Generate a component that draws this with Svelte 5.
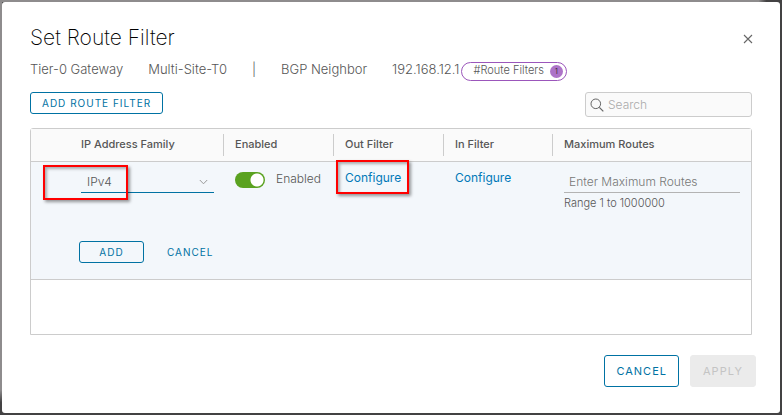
<script>
  let family = $state('IPv4');
  let enabled = $state(true);
  let maxRoutes = $state('');
  let query = $state('');
</script>

<div class="backdrop">
  <div class="modal" role="dialog" aria-labelledby="dialog-title">
    <header>
      <h1 id="dialog-title">Set Route Filter</h1>
      <button class="close" type="button" aria-label="Close">
        <svg width="10" height="10" viewBox="0 0 10 10" aria-hidden="true">
          <path d="M1 1l8 8M9 1l-8 8" fill="none" stroke="#666" stroke-width="1.1" />
        </svg>
      </button>
    </header>

    <div class="context">
      <span>Tier-0 Gateway</span>
      <span>Multi-Site-T0</span>
      <span>|</span>
      <span>BGP Neighbor</span>
      <span class="neighbor">
        192.168.12.1
        <span class="tag">#Route Filters <span class="count">1</span></span>
      </span>
    </div>

    <div class="toolbar">
      <button class="btn small" type="button">ADD ROUTE FILTER</button>
      <label class="search">
        <svg width="14" height="14" viewBox="0 0 14 14" aria-hidden="true">
          <circle cx="5.8" cy="5.8" r="4.8" fill="none" stroke="#666" />
          <path d="M9.3 9.3l4 4" stroke="#666" stroke-width="1.2" />
        </svg>
        <input type="search" placeholder="Search" aria-label="Search" bind:value={query} />
      </label>
    </div>

    <div class="grid">
      <table>
        <colgroup>
          <col class="c-pad" />
          <col class="c-family" />
          <col class="c-mid" />
          <col class="c-mid" />
          <col class="c-in" />
          <col />
        </colgroup>
        <thead>
          <tr>
            <td></td>
            <th scope="col">IP Address Family</th>
            <th scope="col" class="sep">Enabled</th>
            <th scope="col" class="sep">Out Filter</th>
            <th scope="col" class="sep">In Filter</th>
            <th scope="col" class="sep">Maximum Routes</th>
          </tr>
        </thead>
        <tbody>
          <tr class="fields">
            <td></td>
            <td>
              <div class="select">
                <select aria-label="IP Address Family" bind:value={family}>
                  <option>IPv4</option>
                  <option>IPv6</option>
                </select>
                <svg width="9" height="6" viewBox="0 0 9 6" aria-hidden="true">
                  <path d="M.8 1l3.7 3.8L8.2 1" fill="none" stroke="#999" />
                </svg>
                <span class="mark mark-family"></span>
              </div>
            </td>
            <td>
              <label class="toggle">
                <input type="checkbox" bind:checked={enabled} />
                <span>Enabled</span>
              </label>
            </td>
            <td>
              <div class="linkbox">
                <a href="#out-filter">Configure</a>
                <span class="mark mark-out"></span>
              </div>
            </td>
            <td>
              <div class="linkbox"><a href="#in-filter">Configure</a></div>
            </td>
            <td>
              <div class="routes">
                <input
                  type="text"
                  placeholder="Enter Maximum Routes"
                  aria-label="Maximum Routes"
                  aria-describedby="routes-help"
                  bind:value={maxRoutes}
                />
                <small id="routes-help">Range 1 to 1000000</small>
              </div>
            </td>
          </tr>
          <tr class="actions">
            <td></td>
            <td colspan="5">
              <div class="rowbuttons">
                <button class="btn small add" type="button">ADD</button>
                <button class="btn small flat" type="button">CANCEL</button>
              </div>
            </td>
          </tr>
        </tbody>
      </table>
    </div>

    <footer>
      <button class="btn" type="button">CANCEL</button>
      <button class="btn apply" type="button" disabled>APPLY</button>
    </footer>
  </div>
</div>

<style>
  :global(body) {
    margin: 0;
  }
  * {
    box-sizing: border-box;
  }
  .backdrop {
    display: flex;
    min-height: 100vh;
    padding: 2px;
    background:
      linear-gradient(90deg, #8e8c8d 97%, #434243 98%) top / 100% 2px no-repeat,
      linear-gradient(#8e8c8d 94%, #434243 97%) left / 2px 100% no-repeat,
      #434243;
    font-family: Inter, 'Open Sans', sans-serif;
    font-size: 13px;
    font-weight: 300;
    line-height: 18px;
    color: #565656;
  }
  .modal {
    flex: 1;
    min-width: 0;
    display: flex;
    flex-direction: column;
    padding: 24px 28px 26px;
    border-radius: 3px;
    background: #fff;
  }
  header {
    display: flex;
    justify-content: space-between;
    align-items: center;
  }
  h1 {
    margin: 0;
    font-size: 21px;
    line-height: 24px;
    font-weight: 200;
    color: #000;
  }
  button,
  input,
  select {
    font: inherit;
    color: inherit;
  }
  .close {
    display: flex;
    padding: 0;
    margin: 2px -1px 0 0;
    border: 0;
    background: none;
  }
  .context {
    display: flex;
    gap: 25px;
    align-items: center;
    height: 20px;
    margin-top: 9px;
  }
  .neighbor {
    display: flex;
    align-items: center;
    gap: 2px;
  }
  .tag {
    display: flex;
    align-items: center;
    gap: 6px;
    height: 19px;
    margin-top: 4px;
    padding: 0 3px 2px 11px;
    border: 1px solid #9b56bb;
    border-radius: 10px;
    font-size: 11px;
    line-height: 16px;
  }
  .count {
    width: 13px;
    height: 13px;
    margin-top: 2px;
    border-radius: 50%;
    background: #ad73c8;
    color: #222;
    font-size: 8px;
    line-height: 13px;
    text-align: center;
  }
  .toolbar {
    display: flex;
    justify-content: space-between;
    align-items: flex-start;
    margin-top: 13px;
  }
  .btn {
    height: 32px;
    padding: 0 11px;
    border: 1px solid #0072a3;
    border-radius: 3px;
    background: transparent;
    color: #0072a3;
    font-size: 11px;
    font-weight: 400;
    line-height: 16px;
    letter-spacing: 1px;
  }
  .btn.small {
    height: 22px;
    font-size: 10px;
  }
  .search {
    display: flex;
    align-items: center;
    gap: 4px;
    width: 167px;
    height: 25px;
    padding: 0 4px;
    border: 1px solid #ccc;
    border-radius: 3px;
    background: #fafafa;
  }
  .search input {
    flex: 1;
    min-width: 0;
    padding: 0;
    border: 0;
    outline: 0;
    background: none;
    font-size: 12px;
  }
  .search input::placeholder {
    color: #aaa;
  }
  .grid {
    flex: 1;
    margin-top: 11px;
    border: 1px solid #ccc;
    border-radius: 3px 3px 0 0;
  }
  table {
    width: 100%;
    table-layout: fixed;
    border-collapse: separate;
    border-spacing: 0;
  }
  .c-pad {
    width: 38px;
  }
  .c-family {
    width: 154px;
  }
  .c-mid {
    width: 110px;
  }
  .c-in {
    width: 109px;
  }
  th,
  td {
    padding: 0 11px 0 12px;
    text-align: left;
    vertical-align: top;
  }
  thead th,
  thead td {
    height: 33px;
    border-bottom: 1px solid #ccc;
    background: #fafafa;
    font-size: 11px;
    font-weight: 500;
    line-height: 16px;
    vertical-align: middle;
    white-space: nowrap;
  }
  thead th {
    padding-bottom: 2px;
  }
  th.sep {
    background: linear-gradient(#ccc, #ccc) left center / 1px 22px no-repeat #fafafa;
  }
  tbody td {
    background: #f3f7fb;
  }
  .fields td {
    height: 79px;
    padding-top: 7px;
  }
  .select {
    position: relative;
    display: flex;
    align-items: center;
    height: 24px;
    margin-right: -2px;
    border-bottom: 1px solid #0072a3;
  }
  .select select {
    flex: 1;
    appearance: none;
    height: 22px;
    padding: 2px 6px 0;
    border: 0;
    outline: 0;
    background: none;
    font-size: 12px;
  }
  .select svg {
    margin: 2px 6px 0 0;
  }
  .mark {
    position: absolute;
    border: 2px solid #f00;
    box-shadow:
      2px 2px 3px rgba(0, 0, 0, 0.4),
      inset 2px 2px 3px rgba(0, 0, 0, 0.3);
    pointer-events: none;
  }
  .mark-family {
    left: -38px;
    top: -4px;
    width: 85px;
    height: 35px;
  }
  .mark-out {
    left: -9px;
    top: -9px;
    width: 73px;
    height: 34px;
  }
  .toggle {
    display: flex;
    align-items: center;
    gap: 11px;
    font-size: 12px;
  }
  .toggle input {
    appearance: none;
    flex: none;
    width: 30px;
    height: 16px;
    margin: 3px 0 0;
    border-radius: 8px;
    background: radial-gradient(circle at 22px 8px, #fff 6px, transparent 7px) #5aa220;
  }
  .toggle input:not(:checked) {
    background: radial-gradient(circle at 8px 8px, #fff 6px, transparent 7px) #999;
  }
  .linkbox {
    position: relative;
    font-size: 12px;
  }
  a {
    color: #0079b8;
    font-weight: 400;
    text-decoration: none;
  }
  .routes {
    display: flex;
    flex-direction: column;
  }
  .routes input {
    width: 100%;
    height: 24px;
    padding: 2px 5px 0;
    border: 0;
    border-bottom: 1px solid #b3b3b3;
    outline: 0;
    background: none;
    font-size: 12px;
  }
  .routes input::placeholder {
    color: #777;
  }
  small {
    margin-top: 1px;
    font-size: 11px;
  }
  .actions td {
    height: 39px;
    padding-left: 10px;
    border-bottom: 1px solid #ccc;
  }
  .rowbuttons {
    display: flex;
    gap: 11px;
  }
  .add {
    width: 65px;
  }
  .btn.flat {
    border-color: transparent;
  }
  footer {
    display: flex;
    justify-content: flex-end;
    gap: 11px;
    margin: 20px -4px 0 0;
  }
  .apply {
    min-width: 66px;
    border-color: #ebebeb;
    background: #ebebeb;
    color: #c4c4c4;
  }
</style>
